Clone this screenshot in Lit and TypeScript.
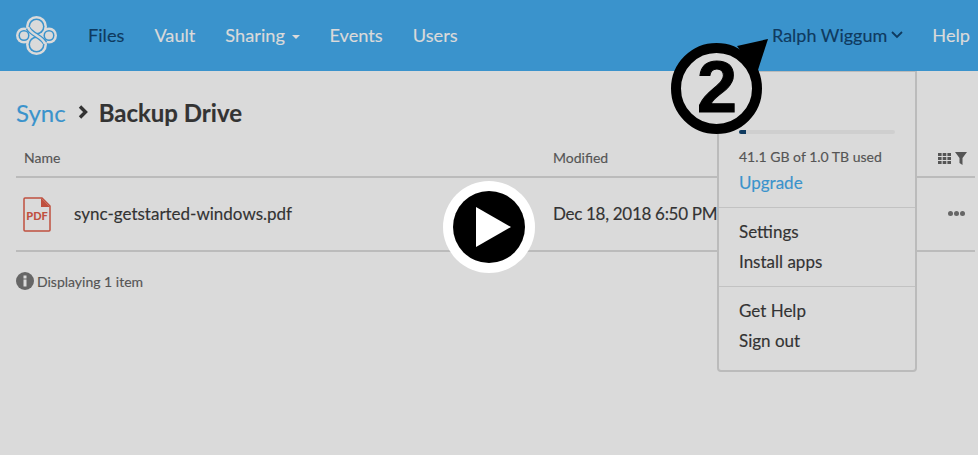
import { LitElement, html, css, svg } from 'lit';
import { customElement } from 'lit/decorators.js';

const logo = svg`
  <svg class="logo" viewBox="0 0 41 39" width="41" height="39">
    <g fill="#dadada">
      <circle cx="20.5" cy="10.5" r="10.5" /><circle cx="20.5" cy="28.5" r="10.5" />
      <circle cx="8" cy="19.5" r="8" /><circle cx="33" cy="19.5" r="8" />
    </g>
    <g fill="#3a93cc">
      <circle cx="20.5" cy="10.5" r="8" /><circle cx="20.5" cy="28.5" r="8" />
      <circle cx="8" cy="19.5" r="5.5" /><circle cx="33" cy="19.5" r="5.5" />
    </g>
    <g fill="#dadada">
      <circle cx="20.5" cy="10.5" r="6.5" /><circle cx="20.5" cy="28.5" r="6.5" />
      <circle cx="8" cy="19.5" r="4" /><circle cx="33" cy="19.5" r="4" />
    </g>
    <path d="M12 12C15 18 26 21 29 27" fill="none" stroke="#3a93cc" stroke-width="5" />
    <path d="M12 11C14 19 27 20 29 28" fill="none" stroke="#dadada" stroke-width="2.6" />
  </svg>`;

@customElement('app-root')
export class AppRoot extends LitElement {
  static styles = css`
    :host {
      display: block;
      position: relative;
      width: 978px;
      height: 455px;
      overflow: hidden;
      background: #dadada;
      font-family: Lato, 'Open Sans', sans-serif;
      color: #333;
      -webkit-text-stroke: 0.15px;
    }

    .nav {
      height: 71px;
      background: #3a93cc;
      display: flex;
      align-items: center;
      font-size: 18.2px;
      line-height: 22px;
      color: #dadada;
      padding: 0 8px 2px 16px;
      box-sizing: border-box;
    }
    .logo { margin: 2px 31px 0 0; }
    .links { display: flex; gap: 30px; flex: 1; }
    .active { color: #0f3a5f; }
    .caret {
      display: inline-block;
      border-top: 4px solid #dadada;
      border-left: 4px solid transparent;
      border-right: 4px solid transparent;
      margin-left: 2px;
      vertical-align: 3px;
    }
    .user { color: #0f3a5f; font-size: 18px; display: flex; align-items: center; gap: 4px; margin-right: 29px; }

    .content { padding: 24px 3px 0 16px; }
    .crumbs { display: flex; align-items: center; font-size: 24px; height: 34px; }
    .crumbs a { color: #3a93cc; }
    .crumbs svg { margin: 0 11px 0 12px; }
    .crumbs b { font-weight: 700; color: #333; }

    .head, .row { display: grid; grid-template-columns: 537px 1fr; align-items: center; }
    .head {
      margin-top: 12px;
      height: 31px;
      border-bottom: 2px solid #bbb;
      font-size: 14px;
      line-height: 26px;
      color: #555;
      padding: 1px 0 3px 8px;
      box-sizing: content-box;
      grid-template-columns: 529px 1fr auto;
    }
    .tools { display: flex; gap: 4px; padding: 1px 8px 0 0; align-items: center; }
    .row {
      height: 72px;
      border-bottom: 2px solid #bbb;
      font-size: 17px;
    }
    .name { display: flex; align-items: center; gap: 23px; padding-left: 7px; }
    .name span, .date span { position: relative; top: -1px; }
    .date { letter-spacing: -0.3px; display: flex; justify-content: space-between; }
    .date .dots { display: flex; gap: 1px; padding-right: 10px; align-items: center; }
    .dots i { width: 5px; height: 5px; border-radius: 50%; background: #666; }
    .count { display: flex; align-items: center; gap: 3px; margin-top: 20px; font-size: 14px; color: #555; }

    .menu {
      position: absolute;
      left: 717px;
      top: 71px;
      width: 200px;
      height: 301px;
      box-sizing: border-box;
      background: #dadada;
      border: 2px solid #bbb;
      border-top-width: 1px;
      border-radius: 0 0 4px 4px;
      font-size: 17px;
      color: #333;
    }
    .usage { padding: 58px 20px 0 20px; height: 136px; box-sizing: border-box; border-bottom: 1px solid #c2c2c2; }
    .bar { height: 4px; width: 156px; background: #cfcfcf; border-radius: 2px; overflow: hidden; }
    .bar i { display: block; width: 7px; height: 100%; background: #0f3a5f; }
    .used { font-size: 14px; color: #555; margin-top: 14px; line-height: 18px; }
    .upgrade { display: block; color: #3a93cc; font-size: 17px; line-height: 24px; margin-top: 5px; }
    .group { padding: 9px 20px; border-bottom: 1px solid #c2c2c2; }
    .group:last-child { border-bottom: 0; }
    .group div { height: 30px; line-height: 30px; }

    .callout { position: absolute; left: 665px; top: 35px; }
    .digit {
      position: absolute;
      left: 697px;
      top: 49px;
      font: 700 72px/76px 'Liberation Sans', sans-serif;
      -webkit-text-stroke: 1px #000;
      color: #000;
    }
    .play { position: absolute; left: 443px; top: 181px; }
  `;

  render() {
    return html`
      <div class="nav">
        ${logo}
        <div class="links">
          <span class="active">Files</span>
          <span>Vault</span>
          <span>Sharing <i class="caret"></i></span>
          <span>Events</span>
          <span>Users</span>
        </div>
        <span class="user">
          Ralph Wiggum
          <svg width="12" height="8" viewBox="0 0 12 8" fill="none" stroke="#0f3a5f" stroke-width="1.8"><path d="M1 1l5 5 5-5" /></svg>
        </span>
        <span>Help</span>
      </div>

      <div class="content">
        <div class="crumbs">
          <a>Sync</a>
          <svg width="10" height="14" viewBox="0 0 10 14" fill="none" stroke="#333" stroke-width="3.4"><path d="M2 1.5L7.5 7 2 12.5" /></svg>
          <b>Backup Drive</b>
        </div>
        <div class="head">
          <span>Name</span>
          <span>Modified</span>
          <span class="tools">
            <svg width="13" height="11" viewBox="0 0 13 11" fill="#555"><path d="M0 0h3.6v3H0zM4.7 0h3.6v3H4.7zM9.4 0H13v3H9.4zM0 4h3.6v3H0zM4.7 4h3.6v3H4.7zM9.4 4H13v3H9.4zM0 8h3.6v3H0zM4.7 8h3.6v3H4.7zM9.4 8H13v3H9.4z" /></svg>
            <svg width="12" height="13" viewBox="0 0 12 13" fill="#555"><path d="M0 0h12L7.5 6v7l-3-2V6z" /></svg>
          </span>
        </div>
        <div class="row">
          <div class="name">
            <svg width="28" height="35" viewBox="0 0 28 35">
              <path d="M1 2a1 1 0 0 1 1-1h17l8 8v24a1 1 0 0 1-1 1H2a1 1 0 0 1-1-1z" fill="none" stroke="#c0503f" stroke-width="1.5" />
              <path d="M18 1l9 9h-9z" fill="#c0503f" />
              <text x="14" y="23" text-anchor="middle" font-family="Lato" font-weight="900" font-size="11" fill="#c0503f">PDF</text>
            </svg>
            <span>sync-getstarted-windows.pdf</span>
          </div>
          <div class="date">
            <span>Dec 18, 2018 6:50 PM</span>
            <span class="dots"><i></i><i></i><i></i></span>
          </div>
        </div>
        <div class="count">
          <svg width="18" height="18" viewBox="0 0 18 18"><circle cx="9" cy="9" r="9" fill="#666" /><rect x="7.5" y="7.5" width="3" height="7" fill="#dadada" /><rect x="7.5" y="3.5" width="3" height="3" fill="#dadada" /></svg>
          Displaying 1 item
        </div>
      </div>

      <div class="menu">
        <div class="usage">
          <div class="bar"><i></i></div>
          <div class="used">41.1 GB of 1.0 TB used</div>
          <a class="upgrade">Upgrade</a>
        </div>
        <div class="group"><div>Settings</div><div>Install apps</div></div>
        <div class="group"><div>Get Help</div><div>Sign out</div></div>
      </div>

      <svg class="callout" width="110" height="105" viewBox="665 35 110 105">
        <circle cx="716.5" cy="88.5" r="40.5" fill="#dadada" stroke="#000" stroke-width="10" />
        <path d="M737 46L768 39L757 73z" fill="#000" />
      </svg>
      <span class="digit">2</span>

      <svg class="play" width="92" height="92" viewBox="0 0 92 92">
        <circle cx="46" cy="46" r="46" fill="#fff" />
        <circle cx="46" cy="46" r="36" fill="#000" />
        <path d="M33 26l35 20-35 20z" fill="#fff" />
      </svg>
    `;
  }
}
